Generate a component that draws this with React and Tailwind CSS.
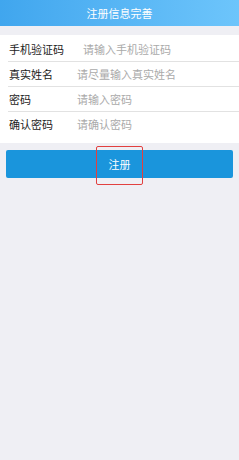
export default function App() {
  const rows = [
    { label: "手机验证码", placeholder: "请输入手机验证码", gap: "ml-[74px]" },
    { label: "真实姓名", placeholder: "请尽量输入真实姓名", gap: "ml-[68px]" },
    { label: "密码", placeholder: "请输入密码", gap: "ml-[68px]" },
    { label: "确认密码", placeholder: "请确认密码", gap: "ml-[68px]" },
  ];

  return (
    <div
      className="relative min-h-[460px] bg-[#efeff4]"
      style={{ fontFamily: '"Noto Sans CJK SC", "Noto Sans", sans-serif' }}
    >
      <div className="h-[26px] bg-gradient-to-r from-[#40a6ee] to-[#6dc5fb] flex items-center justify-center text-white text-[11px] leading-none">
        注册信息完善
      </div>

      <div className="mt-[9px] bg-white pt-[2px] pb-[6px] pl-[8px]">
        {rows.map((row, i) => (
          <div
            key={row.label}
            className={`h-[25px] flex items-center pl-px ${
              i < rows.length - 1 ? "border-b border-[#e2e2e2]" : ""
            }`}
          >
            <span className="w-0 whitespace-nowrap text-[11px] text-[#1c1c1c]">
              {row.label}
            </span>
            <span className={`${row.gap} text-[11px] text-[#aaa]`}>
              {row.placeholder}
            </span>
          </div>
        ))}
      </div>

      <div className="px-[6px] mt-[7px]">
        <div className="relative h-[28px] rounded-[2px] bg-[#1a95dc] flex items-center justify-center text-white text-[11px]">
          注册
          <div className="absolute left-[90px] top-[-4px] w-[47px] h-[39px] border border-[#e2403f] rounded-[2px]" />
        </div>
      </div>
    </div>
  );
}
